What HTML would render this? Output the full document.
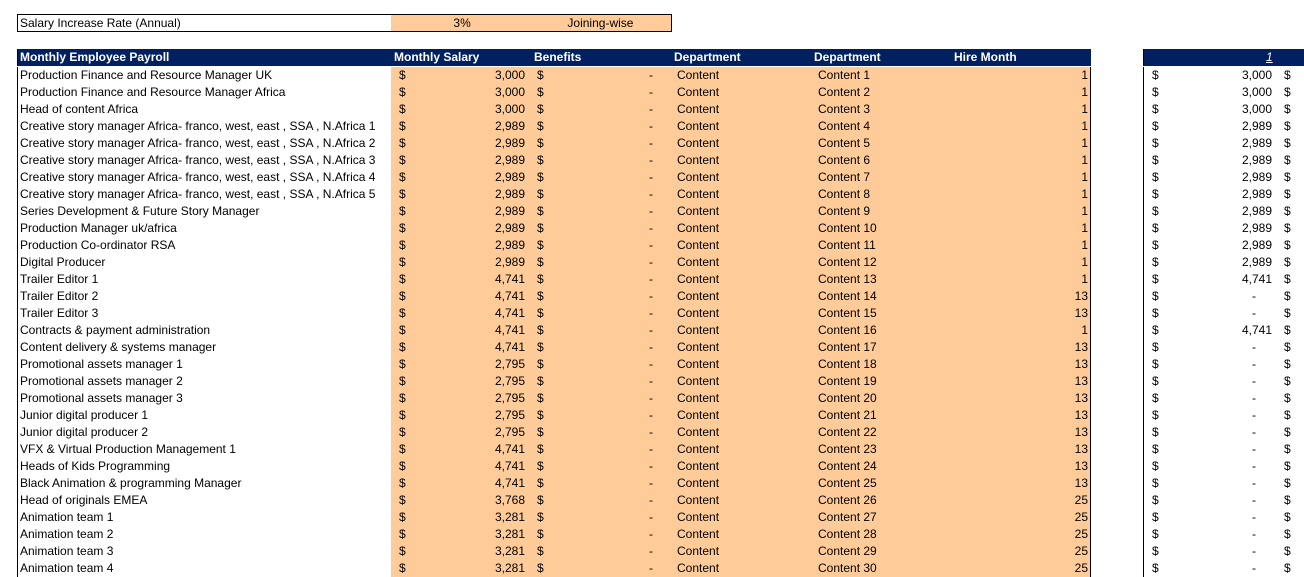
<!DOCTYPE html>
<html><head><meta charset="utf-8"><style>
*{margin:0;padding:0;box-sizing:border-box}
body{width:1304px;height:568px;overflow:hidden;background:#fff;font-family:"Liberation Sans",sans-serif;font-size:12px;letter-spacing:0;color:#000;position:relative}
.top{position:absolute;left:17px;top:14px;width:655px;height:18px;border:1px solid #000;display:flex}
.top div{line-height:16px}
.r{position:absolute;left:17px;height:17px;width:1287px;display:flex;line-height:17px;white-space:nowrap}
.c{position:relative;height:17px;overflow:hidden}
.a{width:374px;border-left:1px solid #000;padding-left:2px}
.o{background:#FFCC99}
.b,.cc,.d,.e,.f{width:140px}
.f{border-right:1px solid #000;text-align:right;padding-right:2px}
.g{width:52px}
.h{width:135px;border-left:1px solid #000}
.i{width:26px}
.L{position:absolute;left:8px}
.R{position:absolute;right:6px}
.h .R[style]{right:22px !important}
.hd{background:#002060;color:#fff;font-weight:bold}
.hd .c{border-color:#002060}
#w{position:absolute;left:0;top:1px;width:1304px;height:568px}
</style></head><body>
<div class="top"><div style="width:374px;padding-left:2px">Salary Increase Rate (Annual)</div><div class="o" style="width:280px;position:relative"><span style="position:absolute;left:62px">3%</span><span style="position:absolute;left:176px">Joining-wise</span></div></div>

<div class="r hd" style="top:49px">
<div class="c a" style="border-left:1px solid #000">Monthly Employee Payroll</div>
<div class="c b" style="padding-left:3px">Monthly Salary</div>
<div class="c cc" style="padding-left:3px">Benefits</div>
<div class="c d" style="padding-left:3px">Department</div>
<div class="c e" style="padding-left:3px">Department</div>
<div class="c f" style="text-align:left;padding-left:3px;border-right:1px solid #002060">Hire Month</div>
<div class="c g" style="background:#fff"></div>
<div class="c" style="width:161px;border-left:1px solid #000;position:relative"><span style="position:absolute;left:122px;font-style:italic;font-weight:normal;text-decoration:underline">1</span></div>
</div>

<div id="w">
<div class="r" style="top:66px"><div class="c a">Production Finance and Resource Manager UK</div><div class="c b o"><span class="L">$</span><span class="R">3,000</span></div><div class="c cc o"><span class="L" style="left:6px">$</span><span class="R" style="right:18px">-</span></div><div class="c d o" style="padding-left:6px">Content</div><div class="c e o" style="padding-left:7px">Content 1</div><div class="c f o">1</div><div class="c g"></div><div class="c h"><span class="L">$</span><span class="R">3,000</span></div><div class="c i"><span class="L" style="left:6px">$</span></div></div>
<div class="r" style="top:83px"><div class="c a">Production Finance and Resource Manager Africa</div><div class="c b o"><span class="L">$</span><span class="R">3,000</span></div><div class="c cc o"><span class="L" style="left:6px">$</span><span class="R" style="right:18px">-</span></div><div class="c d o" style="padding-left:6px">Content</div><div class="c e o" style="padding-left:7px">Content 2</div><div class="c f o">1</div><div class="c g"></div><div class="c h"><span class="L">$</span><span class="R">3,000</span></div><div class="c i"><span class="L" style="left:6px">$</span></div></div>
<div class="r" style="top:100px"><div class="c a">Head of content Africa</div><div class="c b o"><span class="L">$</span><span class="R">3,000</span></div><div class="c cc o"><span class="L" style="left:6px">$</span><span class="R" style="right:18px">-</span></div><div class="c d o" style="padding-left:6px">Content</div><div class="c e o" style="padding-left:7px">Content 3</div><div class="c f o">1</div><div class="c g"></div><div class="c h"><span class="L">$</span><span class="R">3,000</span></div><div class="c i"><span class="L" style="left:6px">$</span></div></div>
<div class="r" style="top:117px"><div class="c a">Creative story manager Africa- franco, west, east , SSA , N.Africa 1</div><div class="c b o"><span class="L">$</span><span class="R">2,989</span></div><div class="c cc o"><span class="L" style="left:6px">$</span><span class="R" style="right:18px">-</span></div><div class="c d o" style="padding-left:6px">Content</div><div class="c e o" style="padding-left:7px">Content 4</div><div class="c f o">1</div><div class="c g"></div><div class="c h"><span class="L">$</span><span class="R">2,989</span></div><div class="c i"><span class="L" style="left:6px">$</span></div></div>
<div class="r" style="top:134px"><div class="c a">Creative story manager Africa- franco, west, east , SSA , N.Africa 2</div><div class="c b o"><span class="L">$</span><span class="R">2,989</span></div><div class="c cc o"><span class="L" style="left:6px">$</span><span class="R" style="right:18px">-</span></div><div class="c d o" style="padding-left:6px">Content</div><div class="c e o" style="padding-left:7px">Content 5</div><div class="c f o">1</div><div class="c g"></div><div class="c h"><span class="L">$</span><span class="R">2,989</span></div><div class="c i"><span class="L" style="left:6px">$</span></div></div>
<div class="r" style="top:151px"><div class="c a">Creative story manager Africa- franco, west, east , SSA , N.Africa 3</div><div class="c b o"><span class="L">$</span><span class="R">2,989</span></div><div class="c cc o"><span class="L" style="left:6px">$</span><span class="R" style="right:18px">-</span></div><div class="c d o" style="padding-left:6px">Content</div><div class="c e o" style="padding-left:7px">Content 6</div><div class="c f o">1</div><div class="c g"></div><div class="c h"><span class="L">$</span><span class="R">2,989</span></div><div class="c i"><span class="L" style="left:6px">$</span></div></div>
<div class="r" style="top:168px"><div class="c a">Creative story manager Africa- franco, west, east , SSA , N.Africa 4</div><div class="c b o"><span class="L">$</span><span class="R">2,989</span></div><div class="c cc o"><span class="L" style="left:6px">$</span><span class="R" style="right:18px">-</span></div><div class="c d o" style="padding-left:6px">Content</div><div class="c e o" style="padding-left:7px">Content 7</div><div class="c f o">1</div><div class="c g"></div><div class="c h"><span class="L">$</span><span class="R">2,989</span></div><div class="c i"><span class="L" style="left:6px">$</span></div></div>
<div class="r" style="top:185px"><div class="c a">Creative story manager Africa- franco, west, east , SSA , N.Africa 5</div><div class="c b o"><span class="L">$</span><span class="R">2,989</span></div><div class="c cc o"><span class="L" style="left:6px">$</span><span class="R" style="right:18px">-</span></div><div class="c d o" style="padding-left:6px">Content</div><div class="c e o" style="padding-left:7px">Content 8</div><div class="c f o">1</div><div class="c g"></div><div class="c h"><span class="L">$</span><span class="R">2,989</span></div><div class="c i"><span class="L" style="left:6px">$</span></div></div>
<div class="r" style="top:202px"><div class="c a">Series Development &amp; Future Story Manager</div><div class="c b o"><span class="L">$</span><span class="R">2,989</span></div><div class="c cc o"><span class="L" style="left:6px">$</span><span class="R" style="right:18px">-</span></div><div class="c d o" style="padding-left:6px">Content</div><div class="c e o" style="padding-left:7px">Content 9</div><div class="c f o">1</div><div class="c g"></div><div class="c h"><span class="L">$</span><span class="R">2,989</span></div><div class="c i"><span class="L" style="left:6px">$</span></div></div>
<div class="r" style="top:219px"><div class="c a">Production Manager uk/africa</div><div class="c b o"><span class="L">$</span><span class="R">2,989</span></div><div class="c cc o"><span class="L" style="left:6px">$</span><span class="R" style="right:18px">-</span></div><div class="c d o" style="padding-left:6px">Content</div><div class="c e o" style="padding-left:7px">Content 10</div><div class="c f o">1</div><div class="c g"></div><div class="c h"><span class="L">$</span><span class="R">2,989</span></div><div class="c i"><span class="L" style="left:6px">$</span></div></div>
<div class="r" style="top:236px"><div class="c a">Production Co-ordinator RSA</div><div class="c b o"><span class="L">$</span><span class="R">2,989</span></div><div class="c cc o"><span class="L" style="left:6px">$</span><span class="R" style="right:18px">-</span></div><div class="c d o" style="padding-left:6px">Content</div><div class="c e o" style="padding-left:7px">Content 11</div><div class="c f o">1</div><div class="c g"></div><div class="c h"><span class="L">$</span><span class="R">2,989</span></div><div class="c i"><span class="L" style="left:6px">$</span></div></div>
<div class="r" style="top:253px"><div class="c a">Digital Producer</div><div class="c b o"><span class="L">$</span><span class="R">2,989</span></div><div class="c cc o"><span class="L" style="left:6px">$</span><span class="R" style="right:18px">-</span></div><div class="c d o" style="padding-left:6px">Content</div><div class="c e o" style="padding-left:7px">Content 12</div><div class="c f o">1</div><div class="c g"></div><div class="c h"><span class="L">$</span><span class="R">2,989</span></div><div class="c i"><span class="L" style="left:6px">$</span></div></div>
<div class="r" style="top:270px"><div class="c a">Trailer Editor 1</div><div class="c b o"><span class="L">$</span><span class="R">4,741</span></div><div class="c cc o"><span class="L" style="left:6px">$</span><span class="R" style="right:18px">-</span></div><div class="c d o" style="padding-left:6px">Content</div><div class="c e o" style="padding-left:7px">Content 13</div><div class="c f o">1</div><div class="c g"></div><div class="c h"><span class="L">$</span><span class="R">4,741</span></div><div class="c i"><span class="L" style="left:6px">$</span></div></div>
<div class="r" style="top:287px"><div class="c a">Trailer Editor 2</div><div class="c b o"><span class="L">$</span><span class="R">4,741</span></div><div class="c cc o"><span class="L" style="left:6px">$</span><span class="R" style="right:18px">-</span></div><div class="c d o" style="padding-left:6px">Content</div><div class="c e o" style="padding-left:7px">Content 14</div><div class="c f o">13</div><div class="c g"></div><div class="c h"><span class="L">$</span><span class="R" style="right:18px">-</span></div><div class="c i"><span class="L" style="left:6px">$</span></div></div>
<div class="r" style="top:304px"><div class="c a">Trailer Editor 3</div><div class="c b o"><span class="L">$</span><span class="R">4,741</span></div><div class="c cc o"><span class="L" style="left:6px">$</span><span class="R" style="right:18px">-</span></div><div class="c d o" style="padding-left:6px">Content</div><div class="c e o" style="padding-left:7px">Content 15</div><div class="c f o">13</div><div class="c g"></div><div class="c h"><span class="L">$</span><span class="R" style="right:18px">-</span></div><div class="c i"><span class="L" style="left:6px">$</span></div></div>
<div class="r" style="top:321px"><div class="c a">Contracts &amp; payment administration</div><div class="c b o"><span class="L">$</span><span class="R">4,741</span></div><div class="c cc o"><span class="L" style="left:6px">$</span><span class="R" style="right:18px">-</span></div><div class="c d o" style="padding-left:6px">Content</div><div class="c e o" style="padding-left:7px">Content 16</div><div class="c f o">1</div><div class="c g"></div><div class="c h"><span class="L">$</span><span class="R">4,741</span></div><div class="c i"><span class="L" style="left:6px">$</span></div></div>
<div class="r" style="top:338px"><div class="c a">Content delivery &amp; systems manager</div><div class="c b o"><span class="L">$</span><span class="R">4,741</span></div><div class="c cc o"><span class="L" style="left:6px">$</span><span class="R" style="right:18px">-</span></div><div class="c d o" style="padding-left:6px">Content</div><div class="c e o" style="padding-left:7px">Content 17</div><div class="c f o">13</div><div class="c g"></div><div class="c h"><span class="L">$</span><span class="R" style="right:18px">-</span></div><div class="c i"><span class="L" style="left:6px">$</span></div></div>
<div class="r" style="top:355px"><div class="c a">Promotional assets manager 1</div><div class="c b o"><span class="L">$</span><span class="R">2,795</span></div><div class="c cc o"><span class="L" style="left:6px">$</span><span class="R" style="right:18px">-</span></div><div class="c d o" style="padding-left:6px">Content</div><div class="c e o" style="padding-left:7px">Content 18</div><div class="c f o">13</div><div class="c g"></div><div class="c h"><span class="L">$</span><span class="R" style="right:18px">-</span></div><div class="c i"><span class="L" style="left:6px">$</span></div></div>
<div class="r" style="top:372px"><div class="c a">Promotional assets manager 2</div><div class="c b o"><span class="L">$</span><span class="R">2,795</span></div><div class="c cc o"><span class="L" style="left:6px">$</span><span class="R" style="right:18px">-</span></div><div class="c d o" style="padding-left:6px">Content</div><div class="c e o" style="padding-left:7px">Content 19</div><div class="c f o">13</div><div class="c g"></div><div class="c h"><span class="L">$</span><span class="R" style="right:18px">-</span></div><div class="c i"><span class="L" style="left:6px">$</span></div></div>
<div class="r" style="top:389px"><div class="c a">Promotional assets manager 3</div><div class="c b o"><span class="L">$</span><span class="R">2,795</span></div><div class="c cc o"><span class="L" style="left:6px">$</span><span class="R" style="right:18px">-</span></div><div class="c d o" style="padding-left:6px">Content</div><div class="c e o" style="padding-left:7px">Content 20</div><div class="c f o">13</div><div class="c g"></div><div class="c h"><span class="L">$</span><span class="R" style="right:18px">-</span></div><div class="c i"><span class="L" style="left:6px">$</span></div></div>
<div class="r" style="top:406px"><div class="c a">Junior digital producer 1</div><div class="c b o"><span class="L">$</span><span class="R">2,795</span></div><div class="c cc o"><span class="L" style="left:6px">$</span><span class="R" style="right:18px">-</span></div><div class="c d o" style="padding-left:6px">Content</div><div class="c e o" style="padding-left:7px">Content 21</div><div class="c f o">13</div><div class="c g"></div><div class="c h"><span class="L">$</span><span class="R" style="right:18px">-</span></div><div class="c i"><span class="L" style="left:6px">$</span></div></div>
<div class="r" style="top:423px"><div class="c a">Junior digital producer 2</div><div class="c b o"><span class="L">$</span><span class="R">2,795</span></div><div class="c cc o"><span class="L" style="left:6px">$</span><span class="R" style="right:18px">-</span></div><div class="c d o" style="padding-left:6px">Content</div><div class="c e o" style="padding-left:7px">Content 22</div><div class="c f o">13</div><div class="c g"></div><div class="c h"><span class="L">$</span><span class="R" style="right:18px">-</span></div><div class="c i"><span class="L" style="left:6px">$</span></div></div>
<div class="r" style="top:440px"><div class="c a">VFX &amp; Virtual Production Management 1</div><div class="c b o"><span class="L">$</span><span class="R">4,741</span></div><div class="c cc o"><span class="L" style="left:6px">$</span><span class="R" style="right:18px">-</span></div><div class="c d o" style="padding-left:6px">Content</div><div class="c e o" style="padding-left:7px">Content 23</div><div class="c f o">13</div><div class="c g"></div><div class="c h"><span class="L">$</span><span class="R" style="right:18px">-</span></div><div class="c i"><span class="L" style="left:6px">$</span></div></div>
<div class="r" style="top:457px"><div class="c a">Heads of Kids Programming</div><div class="c b o"><span class="L">$</span><span class="R">4,741</span></div><div class="c cc o"><span class="L" style="left:6px">$</span><span class="R" style="right:18px">-</span></div><div class="c d o" style="padding-left:6px">Content</div><div class="c e o" style="padding-left:7px">Content 24</div><div class="c f o">13</div><div class="c g"></div><div class="c h"><span class="L">$</span><span class="R" style="right:18px">-</span></div><div class="c i"><span class="L" style="left:6px">$</span></div></div>
<div class="r" style="top:474px"><div class="c a">Black Animation &amp; programming Manager</div><div class="c b o"><span class="L">$</span><span class="R">4,741</span></div><div class="c cc o"><span class="L" style="left:6px">$</span><span class="R" style="right:18px">-</span></div><div class="c d o" style="padding-left:6px">Content</div><div class="c e o" style="padding-left:7px">Content 25</div><div class="c f o">13</div><div class="c g"></div><div class="c h"><span class="L">$</span><span class="R" style="right:18px">-</span></div><div class="c i"><span class="L" style="left:6px">$</span></div></div>
<div class="r" style="top:491px"><div class="c a">Head of originals EMEA</div><div class="c b o"><span class="L">$</span><span class="R">3,768</span></div><div class="c cc o"><span class="L" style="left:6px">$</span><span class="R" style="right:18px">-</span></div><div class="c d o" style="padding-left:6px">Content</div><div class="c e o" style="padding-left:7px">Content 26</div><div class="c f o">25</div><div class="c g"></div><div class="c h"><span class="L">$</span><span class="R" style="right:18px">-</span></div><div class="c i"><span class="L" style="left:6px">$</span></div></div>
<div class="r" style="top:508px"><div class="c a">Animation team 1</div><div class="c b o"><span class="L">$</span><span class="R">3,281</span></div><div class="c cc o"><span class="L" style="left:6px">$</span><span class="R" style="right:18px">-</span></div><div class="c d o" style="padding-left:6px">Content</div><div class="c e o" style="padding-left:7px">Content 27</div><div class="c f o">25</div><div class="c g"></div><div class="c h"><span class="L">$</span><span class="R" style="right:18px">-</span></div><div class="c i"><span class="L" style="left:6px">$</span></div></div>
<div class="r" style="top:525px"><div class="c a">Animation team 2</div><div class="c b o"><span class="L">$</span><span class="R">3,281</span></div><div class="c cc o"><span class="L" style="left:6px">$</span><span class="R" style="right:18px">-</span></div><div class="c d o" style="padding-left:6px">Content</div><div class="c e o" style="padding-left:7px">Content 28</div><div class="c f o">25</div><div class="c g"></div><div class="c h"><span class="L">$</span><span class="R" style="right:18px">-</span></div><div class="c i"><span class="L" style="left:6px">$</span></div></div>
<div class="r" style="top:542px"><div class="c a">Animation team 3</div><div class="c b o"><span class="L">$</span><span class="R">3,281</span></div><div class="c cc o"><span class="L" style="left:6px">$</span><span class="R" style="right:18px">-</span></div><div class="c d o" style="padding-left:6px">Content</div><div class="c e o" style="padding-left:7px">Content 29</div><div class="c f o">25</div><div class="c g"></div><div class="c h"><span class="L">$</span><span class="R" style="right:18px">-</span></div><div class="c i"><span class="L" style="left:6px">$</span></div></div>
<div class="r" style="top:559px"><div class="c a">Animation team 4</div><div class="c b o"><span class="L">$</span><span class="R">3,281</span></div><div class="c cc o"><span class="L" style="left:6px">$</span><span class="R" style="right:18px">-</span></div><div class="c d o" style="padding-left:6px">Content</div><div class="c e o" style="padding-left:7px">Content 30</div><div class="c f o">25</div><div class="c g"></div><div class="c h"><span class="L">$</span><span class="R" style="right:18px">-</span></div><div class="c i"><span class="L" style="left:6px">$</span></div></div>
</div>
</body></html>
